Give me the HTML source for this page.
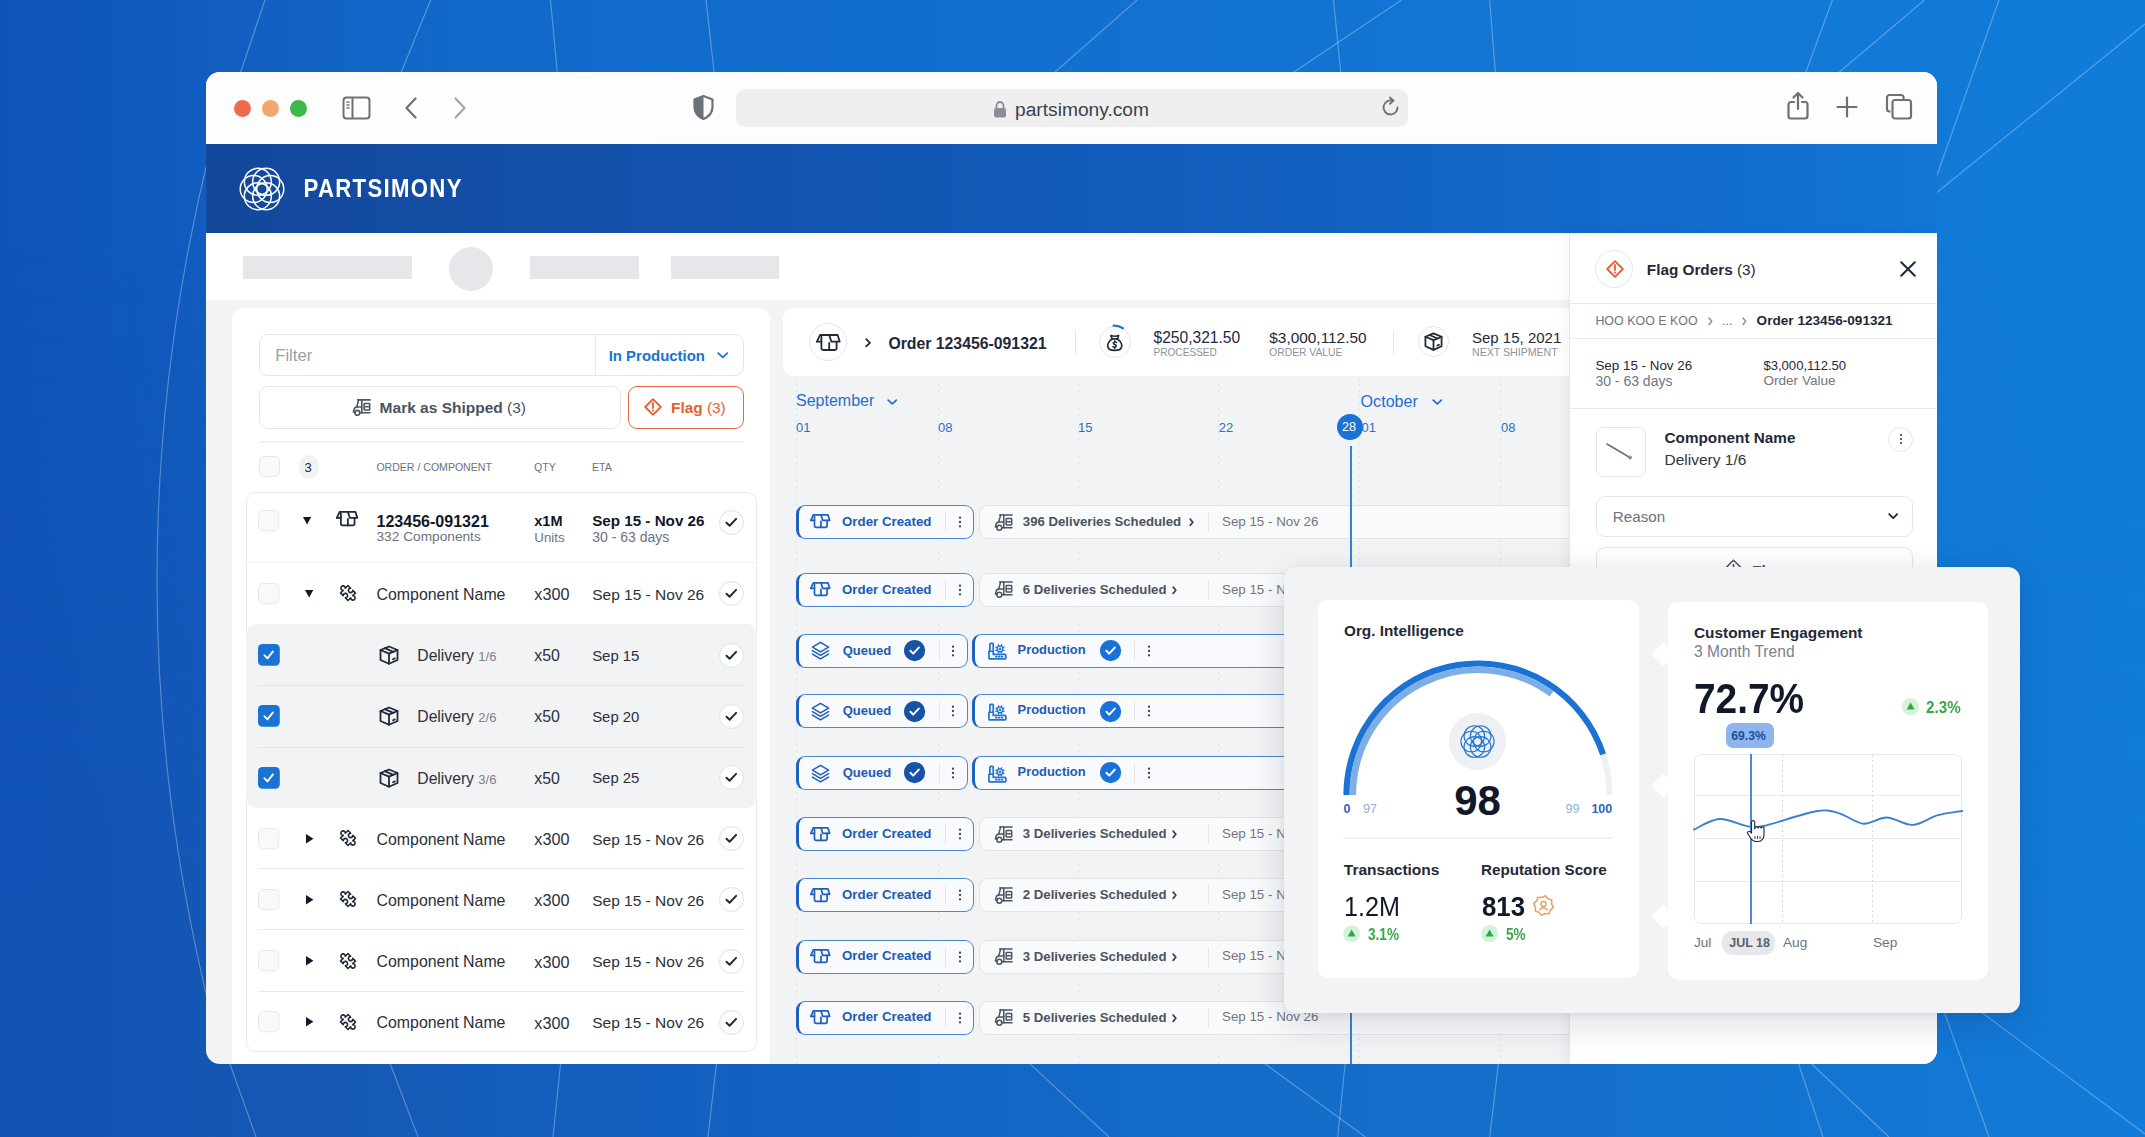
<!DOCTYPE html>
<html><head><meta charset="utf-8"><style>
html,body{margin:0;padding:0;width:2145px;height:1137px;overflow:hidden;background:#1160c3}
body{position:relative;font-family:"Liberation Sans",sans-serif}
.b{position:absolute;box-sizing:border-box}
.t{position:absolute;line-height:1;white-space:nowrap}
svg.b{overflow:visible}
</style></head><body>
<div class="b" style="left:0;top:0;width:2145px;height:1137px;background:linear-gradient(90deg,#1054b7 0%,#1059bd 7%,#1262c3 14%,#1169ca 23%,#126fcf 47%,#1377d5 75%,#107cd9 100%)"></div>
<div class="b" style="left:0;top:0;width:2145px;height:1137px;background:linear-gradient(90deg,#1052b4 0%,#1658b4 14%,#135fbe 28%,#1264c4 42%,#136cc8 58%,#1470cc 75%,#127bd9 100%);-webkit-mask-image:linear-gradient(180deg,transparent 0px,transparent 250px,#000 900px,#000 1137px)"></div>
<svg class="b" style="left:0;top:0" width="2145" height="1137" viewBox="0 0 2145 1137" fill="none" stroke="rgba(255,255,255,0.30)" stroke-width="1.15"><line x1="265" y1="0" x2="238" y2="80"/><line x1="430.7" y1="0" x2="398" y2="80"/><line x1="550.5" y1="0" x2="558" y2="80"/><line x1="706" y1="0" x2="715" y2="80"/><line x1="1137" y1="0" x2="1046" y2="80"/><line x1="1333.5" y1="0" x2="1341.5" y2="80"/><line x1="1401.5" y1="0" x2="1282" y2="80"/><line x1="1489.6" y1="0" x2="1496" y2="80"/><line x1="1832.4" y1="0" x2="1803" y2="80"/><line x1="1924.5" y1="0" x2="1830" y2="80"/><line x1="1999" y1="0" x2="1930" y2="195"/><line x1="2145" y1="24" x2="1930" y2="198"/><line x1="225" y1="1050" x2="256" y2="1137"/><line x1="385" y1="1050" x2="418" y2="1137"/><line x1="562" y1="1050" x2="553" y2="1137"/><line x1="718" y1="1050" x2="708" y2="1137"/><line x1="1015" y1="1050" x2="1109" y2="1137"/><line x1="1246" y1="1050" x2="1365.5" y2="1137"/><line x1="1346.5" y1="1050" x2="1337.7" y2="1137"/><line x1="1500" y1="1050" x2="1489.7" y2="1137"/><line x1="1794" y1="1050" x2="1823" y2="1137"/><line x1="1797" y1="1050" x2="1889" y2="1137"/><line x1="1940" y1="1000" x2="1989" y2="1137"/><line x1="1965" y1="1000" x2="2145" y2="1134"/><path d="M210 150 Q104 580 210 1010"/></svg>
<div class="b" style="left:0;top:0;width:2145px;height:1137px;clip-path:inset(72px 208px 73px 206px round 14px)">
<div class="b" style="left:206.0px;top:72.0px;width:1731.0px;height:992.0px;background:#f2f3f5"></div>
<div class="b" style="left:206.0px;top:72.0px;width:1731.0px;height:72.0px;background:#fdfdfd"></div>
<div class="b" style="left:206.0px;top:144.0px;width:1731.0px;height:89.0px;background:linear-gradient(90deg,#13489b 0%,#1350aa 23%,#125bba 52%,#1269c9 80%,#1275d4 100%)"></div>
<div class="b" style="left:206.0px;top:233.0px;width:1731.0px;height:67.0px;background:#ffffff"></div>
<div class="b" style="left:243.0px;top:256.0px;width:168.5px;height:23.0px;background:#e6e7eb"></div>
<div class="b" style="left:449.0px;top:247.0px;width:44.0px;height:44.0px;background:#e6e7eb;border-radius:50%"></div>
<div class="b" style="left:530.0px;top:256.0px;width:108.5px;height:23.0px;background:#e6e7eb"></div>
<div class="b" style="left:670.5px;top:256.0px;width:108.5px;height:23.0px;background:#e6e7eb"></div>
<div class="b" style="left:234.0px;top:99.5px;width:17.0px;height:17.0px;background:#ec6a4e;border-radius:50%"></div>
<div class="b" style="left:262.0px;top:99.5px;width:17.0px;height:17.0px;background:#f0a86f;border-radius:50%"></div>
<div class="b" style="left:289.5px;top:99.5px;width:17.0px;height:17.0px;background:#3fb84a;border-radius:50%"></div>
<svg class="b" style="left:342.0px;top:96.0px;" width="29" height="24" viewBox="0 0 29 24" fill="none"><rect x="1.5" y="1.5" width="26" height="21" rx="3" stroke="#6b7079" stroke-width="2"/><line x1="10.5" y1="2" x2="10.5" y2="22" stroke="#6b7079" stroke-width="2"/><line x1="4.5" y1="6" x2="7.5" y2="6" stroke="#6b7079" stroke-width="1.4"/><line x1="4.5" y1="9" x2="7.5" y2="9" stroke="#6b7079" stroke-width="1.4"/><line x1="4.5" y1="12" x2="7.5" y2="12" stroke="#6b7079" stroke-width="1.4"/></svg>
<svg class="b" style="left:403.0px;top:96.0px;" width="16" height="24" viewBox="0 0 16 24" fill="none"><path d="M12.5 2.5 L3.5 12 L12.5 21.5" stroke="#6b7079" stroke-width="2.2" stroke-linecap="round" stroke-linejoin="round"/></svg>
<svg class="b" style="left:452.0px;top:96.0px;" width="16" height="24" viewBox="0 0 16 24" fill="none"><path d="M3.5 2.5 L12.5 12 L3.5 21.5" stroke="#a3a7ae" stroke-width="2.2" stroke-linecap="round" stroke-linejoin="round"/></svg>
<svg class="b" style="left:692.0px;top:94.0px;" width="23" height="27" viewBox="0 0 23 27" fill="none"><path d="M11.5 2 L20.5 5.5 V13 C20.5 19 16.5 22.8 11.5 25 C6.5 22.8 2.5 19 2.5 13 V5.5 Z" stroke="#6b7079" stroke-width="2.2" stroke-linejoin="round"/><path d="M11.5 2 L2.5 5.5 V13 C2.5 19 6.5 22.8 11.5 25 Z" fill="#6b7079"/></svg>
<div class="b" style="left:736.0px;top:89.0px;width:672.0px;height:38.0px;background:#efeff0;border-radius:9px"></div>
<svg class="b" style="left:993.0px;top:100.0px;" width="14" height="18" viewBox="0 0 14 18" fill="none"><path d="M3.5 8 V5.5 a3.5 3.5 0 0 1 7 0 V8" stroke="#8a8e95" stroke-width="1.8"/><rect x="1" y="8" width="12" height="9.5" rx="2" fill="#8a8e95"/></svg>
<div class="t" style="left:1015.0px;top:100.1px;font-size:19.2px;font-weight:400;color:#3c414b;">partsimony.com</div>
<svg class="b" style="left:1381.0px;top:96.0px;" width="20" height="22" viewBox="0 0 20 22" fill="none"><path d="M16.5 11.5 A7 7 0 1 1 11 4.6" stroke="#6b7079" stroke-width="1.9" stroke-linecap="round"/><path d="M9 1.5 L12.5 4.6 L9 7.8" stroke="#6b7079" stroke-width="1.9" stroke-linecap="round" stroke-linejoin="round"/></svg>
<svg class="b" style="left:1786.0px;top:91.0px;" width="24" height="30" viewBox="0 0 24 30" fill="none"><path d="M8 11 H5 a2.5 2.5 0 0 0 -2.5 2.5 V25 a2.5 2.5 0 0 0 2.5 2.5 H19 a2.5 2.5 0 0 0 2.5 -2.5 V13.5 a2.5 2.5 0 0 0 -2.5 -2.5 H16" stroke="#6b7079" stroke-width="2.2" stroke-linecap="round"/><path d="M12 18 V2.5 M7.5 6.5 L12 2 L16.5 6.5" stroke="#6b7079" stroke-width="2.2" stroke-linecap="round" stroke-linejoin="round"/></svg>
<svg class="b" style="left:1836.0px;top:96.0px;" width="22" height="22" viewBox="0 0 22 22" fill="none"><path d="M11 1.5 V20.5 M1.5 11 H20.5" stroke="#6b7079" stroke-width="2.2" stroke-linecap="round"/></svg>
<svg class="b" style="left:1885.0px;top:93.0px;" width="28" height="28" viewBox="0 0 28 28" fill="none"><path d="M5.5 18.5 H4.5 a2.5 2.5 0 0 1 -2.5 -2.5 V4.5 a2.5 2.5 0 0 1 2.5 -2.5 H16 a2.5 2.5 0 0 1 2.5 2.5 V6" stroke="#6b7079" stroke-width="2.2"/><rect x="7.5" y="7" width="18.5" height="18.5" rx="2.5" stroke="#6b7079" stroke-width="2.2"/></svg>
<svg class="b" style="left:239.0px;top:166.0px;" width="46" height="46" viewBox="0 0 46 46" fill="none"><g stroke="#ffffff" stroke-width="1.5" fill="none"><circle cx="31.28" cy="23.00" r="13.51"/><circle cx="27.14" cy="30.17" r="13.51"/><circle cx="18.86" cy="30.17" r="13.51"/><circle cx="14.72" cy="23.00" r="13.51"/><circle cx="18.86" cy="15.83" r="13.51"/><circle cx="27.14" cy="15.83" r="13.51"/></g></svg>
<div class="t" style="left:303.5px;top:179.0px;font-size:22.2px;font-weight:700;color:#ffffff;letter-spacing:1.3px;transform:scaleY(1.14);transform-origin:0 80%">PARTSIMONY</div>
<div class="b" style="left:232.0px;top:308.0px;width:538.0px;height:800.0px;background:#ffffff;border-radius:12px"></div>
<div class="b" style="left:258.5px;top:334.3px;width:485.0px;height:42.0px;border:1px solid #e4e6ea;border-radius:9px;background:#fff"></div>
<div class="b" style="left:594.5px;top:335.0px;width:1.0px;height:40.5px;background:#e8eaee"></div>
<div class="t" style="left:275.3px;top:347.9px;font-size:16.6px;font-weight:400;color:#9aa0aa;">Filter</div>
<div class="t" style="left:608.7px;top:349.2px;font-size:14.95px;font-weight:700;color:#1a72d0;">In Production</div>
<svg class="b" style="left:717.0px;top:352.0px;" width="11.5" height="6.5" viewBox="0 0 11.5 6.5" fill="none"><path d="M1.2 1.2 L5.75 5.3 L10.299999999999999 1.2" stroke="#1a72d0" stroke-width="1.8" stroke-linecap="round" stroke-linejoin="round"/></svg>
<div class="b" style="left:259.3px;top:385.5px;width:361.5px;height:43.0px;border:1px solid #e4e6ea;border-radius:9px;background:#fff"></div>
<svg class="b" style="left:351.5px;top:397.5px;" width="19" height="19" viewBox="0 0 19 19" fill="none"><g transform="scale(0.950)" stroke="#4b5563" stroke-width="1.68" stroke-linejoin="round" stroke-linecap="round"><path d="M6 2 H19"/><path d="M7 2 L5 9.5"/><path d="M10.3 2 V15.5 H19"/><rect x="12.8" y="5.8" width="5.8" height="6.8" rx="0.6"/><path d="M14.2 9.2 H17.2"/><path d="M10.3 9.5 H5 Q2.5 9.8 2 12.5 L1.5 14.8 H3.6"/><circle cx="5.6" cy="15.6" r="2.6"/><path d="M8.2 15.5 H10.3"/></g></svg>
<div class="t" style="left:379.6px;top:400.0px;font-size:15.5px;font-weight:700;color:#4b5261;">Mark as Shipped <span style="font-weight:400">(3)</span></div>
<div class="b" style="left:628.4px;top:385.5px;width:115.2px;height:43.0px;border:1.6px solid #e8683f;border-radius:9px;background:#fff"></div>
<svg class="b" style="left:644.0px;top:398.0px;" width="18" height="18" viewBox="0 0 18 18" fill="none"><path d="M9.0 1.2 L16.8 9.0 L9.0 16.8 L1.2 9.0 Z" stroke="#e4602f" stroke-width="1.8" stroke-linejoin="round"/><path d="M9.0 5.0 V10.0" stroke="#e4602f" stroke-width="1.8" stroke-linecap="round"/><circle cx="9.0" cy="12.6" r="1.05" fill="#e4602f"/></svg>
<div class="t" style="left:671.0px;top:400.1px;font-size:15.4px;font-weight:700;color:#e4602f;">Flag <span style="font-weight:400">(3)</span></div>
<div class="b" style="left:258.5px;top:441.0px;width:485.0px;height:2.0px;background:#eef0f3"></div>
<svg class="b" style="left:258.5px;top:456.4px;" width="21" height="21" viewBox="0 0 21 21" fill="none"><rect x="0.5" y="0.5" width="20" height="20" rx="4.5" fill="#f8f9fb" stroke="#e5e7eb" stroke-width="1"/></svg>
<div class="b" style="left:298.8px;top:455.4px;width:20.0px;height:24.0px;background:#f1f2f4;border-radius:10px"></div>
<div class="t" style="left:304.5px;top:461.3px;font-size:13px;font-weight:400;color:#1f2937;">3</div>
<div class="t" style="left:376.4px;top:462.2px;font-size:10.55px;font-weight:400;color:#6b7280;">ORDER / COMPONENT</div>
<div class="t" style="left:534.0px;top:462.2px;font-size:10.6px;font-weight:400;color:#6b7280;">QTY</div>
<div class="t" style="left:592.0px;top:462.2px;font-size:10.6px;font-weight:400;color:#6b7280;">ETA</div>
<div class="b" style="left:246.0px;top:492.0px;width:510.6px;height:560.2px;border:1px solid #e8eaee;border-radius:10px;background:#fff"></div>
<div class="b" style="left:246.0px;top:562.0px;width:510.6px;height:1.2px;background:#eceef1"></div>
<div class="b" style="left:246.0px;top:624.0px;width:510.6px;height:183.6px;background:#f2f3f5;border-radius:10px"></div>
<div class="b" style="left:258.0px;top:684.5px;width:486.5px;height:1.0px;background:#e2e5e9"></div>
<div class="b" style="left:258.0px;top:746.5px;width:486.5px;height:1.0px;background:#e2e5e9"></div>
<div class="b" style="left:258.0px;top:868.2px;width:486.5px;height:1.0px;background:#e8eaee"></div>
<div class="b" style="left:258.0px;top:929.2px;width:486.5px;height:1.0px;background:#e8eaee"></div>
<div class="b" style="left:258.0px;top:991.0px;width:486.5px;height:1.0px;background:#e8eaee"></div>
<svg class="b" style="left:258.0px;top:510.0px;" width="21.3" height="21.3" viewBox="0 0 21.3 21.3" fill="none"><rect x="0.5" y="0.5" width="20.3" height="20.3" rx="4.5" fill="#f8f9fb" stroke="#e5e7eb" stroke-width="1"/></svg>
<svg class="b" style="left:303.4px;top:516.8px;" width="8.2" height="7.4" viewBox="0 0 8.2 7.4" fill="none"><path d="M0 0 H8.2 L4.1 7.4 Z" fill="#111827"/></svg>
<svg class="b" style="left:335.6px;top:511.0px;" width="22.5" height="15.8" viewBox="0 0 22.5 15.8" fill="none"><g transform="scale(0.9)" stroke="#1f2937" stroke-width="2.00" stroke-linejoin="round" stroke-linecap="round"><path d="M1 7.6 L4 1 H21.6 L23.7 7.6 H15.3 L13.2 1"/><path d="M1 7.6 H5.4"/><path d="M5.4 2.4 V14.2 a1.8 1.8 0 0 0 1.8 1.8 H18.8 a1.8 1.8 0 0 0 1.8 -1.8 V7.6"/><path d="M13.2 8.8 V16"/></g></svg>
<div class="t" style="left:376.5px;top:512.6px;font-size:16.05px;font-weight:700;color:#111827;">123456-091321</div>
<div class="t" style="left:376.5px;top:530.4px;font-size:13.7px;font-weight:400;color:#6b7280;">332 Components</div>
<div class="t" style="left:534.3px;top:513.9px;font-size:14.5px;font-weight:700;color:#111827;">x1M</div>
<div class="t" style="left:534.3px;top:530.7px;font-size:13.3px;font-weight:400;color:#6b7280;">Units</div>
<div class="t" style="left:592.2px;top:513.3px;font-size:15.2px;font-weight:700;color:#111827;">Sep 15 - Nov 26</div>
<div class="t" style="left:592.2px;top:530.1px;font-size:14.0px;font-weight:400;color:#6b7280;">30 - 63 days</div>
<svg class="b" style="left:718.7px;top:510.0px;" width="25" height="25" viewBox="0 0 25 25" fill="none"><circle cx="12.5" cy="12.5" r="11.9" fill="#fff" stroke="#e3e6ea" stroke-width="1.1"/><path d="M7.5 12.7 L10.6 15.7 L17.1 8.9" stroke="#1f2937" stroke-width="2" stroke-linecap="round" stroke-linejoin="round"/></svg>
<svg class="b" style="left:258.0px;top:582.9px;" width="21.3" height="21.3" viewBox="0 0 21.3 21.3" fill="none"><rect x="0.5" y="0.5" width="20.3" height="20.3" rx="4.5" fill="#f8f9fb" stroke="#e5e7eb" stroke-width="1"/></svg>
<svg class="b" style="left:305.2px;top:589.9px;" width="8.3" height="7.4" viewBox="0 0 8.3 7.4" fill="none"><path d="M0 0 H8.3 L4.15 7.4 Z" fill="#111827"/></svg>
<svg class="b" style="left:339.2px;top:584.2px;" width="18" height="18" viewBox="0 0 18 18" fill="none"><g transform="translate(9.00 9.00) scale(1.000) rotate(45)" stroke="#1f2937" stroke-width="1.60" stroke-linejoin="round"><path d="M-5.3 -5.3 H-1.5 A2.2 2.2 0 1 0 1.5 -5.3 H5.3 V-1.5 A2.2 2.2 0 1 1 5.3 1.5 V5.3 H1.5 A2.2 2.2 0 1 0 -1.5 5.3 H-5.3 V1.5 A2.2 2.2 0 1 1 -5.3 -1.5 Z"/></g></svg>
<div class="t" style="left:376.5px;top:586.6px;font-size:15.9px;font-weight:400;color:#2b303a;">Component Name</div>
<div class="t" style="left:534.3px;top:586.3px;font-size:16.2px;font-weight:400;color:#2b303a;">x300</div>
<div class="t" style="left:592.2px;top:586.9px;font-size:15.5px;font-weight:400;color:#2b303a;">Sep 15 - Nov 26</div>
<svg class="b" style="left:718.7px;top:581.0px;" width="25" height="25" viewBox="0 0 25 25" fill="none"><circle cx="12.5" cy="12.5" r="11.9" fill="#fff" stroke="#e3e6ea" stroke-width="1.1"/><path d="M7.5 12.7 L10.6 15.7 L17.1 8.9" stroke="#1f2937" stroke-width="2" stroke-linecap="round" stroke-linejoin="round"/></svg>
<svg class="b" style="left:257.9px;top:644.0px;" width="21.8" height="21.8" viewBox="0 0 21.8 21.8" fill="none"><rect x="0" y="0" width="21.8" height="21.8" rx="4.5" fill="#1a73d4"/><path d="M6.5 11.3 L9.4 14.4 L15.0 7.4" stroke="#fff" stroke-width="1.9" stroke-linecap="round" stroke-linejoin="round"/></svg>
<svg class="b" style="left:378.6px;top:645.0px;" width="20" height="20" viewBox="0 0 20 20" fill="none"><g transform="scale(1.000)" stroke="#1f2937" stroke-width="1.80" stroke-linejoin="round" stroke-linecap="round"><path d="M10 1.5 L18.5 5 V15 L10 18.8 L1.5 15 V5 Z"/><path d="M1.5 5 L10 8.6 L18.5 5"/><path d="M10 8.6 V18.8"/><path d="M5.8 3.2 L14.3 6.8"/><path d="M14 14.2 L15.8 13.4"/></g></svg>
<div class="t" style="left:417.3px;top:648.2px;font-size:15.7px;font-weight:400;color:#2b303a;">Delivery <span style="color:#7b818b;font-size:13px">1/6</span></div>
<div class="t" style="left:534.3px;top:648.1px;font-size:15.9px;font-weight:400;color:#2b303a;">x50</div>
<div class="t" style="left:592.2px;top:648.9px;font-size:14.9px;font-weight:400;color:#2b303a;">Sep 15</div>
<svg class="b" style="left:718.7px;top:642.5px;" width="25" height="25" viewBox="0 0 25 25" fill="none"><circle cx="12.5" cy="12.5" r="11.9" fill="#fff" stroke="#e3e6ea" stroke-width="1.1"/><path d="M7.5 12.7 L10.6 15.7 L17.1 8.9" stroke="#1f2937" stroke-width="2" stroke-linecap="round" stroke-linejoin="round"/></svg>
<svg class="b" style="left:257.9px;top:705.0px;" width="21.8" height="21.8" viewBox="0 0 21.8 21.8" fill="none"><rect x="0" y="0" width="21.8" height="21.8" rx="4.5" fill="#1a73d4"/><path d="M6.5 11.3 L9.4 14.4 L15.0 7.4" stroke="#fff" stroke-width="1.9" stroke-linecap="round" stroke-linejoin="round"/></svg>
<svg class="b" style="left:378.6px;top:706.0px;" width="20" height="20" viewBox="0 0 20 20" fill="none"><g transform="scale(1.000)" stroke="#1f2937" stroke-width="1.80" stroke-linejoin="round" stroke-linecap="round"><path d="M10 1.5 L18.5 5 V15 L10 18.8 L1.5 15 V5 Z"/><path d="M1.5 5 L10 8.6 L18.5 5"/><path d="M10 8.6 V18.8"/><path d="M5.8 3.2 L14.3 6.8"/><path d="M14 14.2 L15.8 13.4"/></g></svg>
<div class="t" style="left:417.3px;top:709.2px;font-size:15.7px;font-weight:400;color:#2b303a;">Delivery <span style="color:#7b818b;font-size:13px">2/6</span></div>
<div class="t" style="left:534.3px;top:709.1px;font-size:15.9px;font-weight:400;color:#2b303a;">x50</div>
<div class="t" style="left:592.2px;top:709.9px;font-size:14.9px;font-weight:400;color:#2b303a;">Sep 20</div>
<svg class="b" style="left:718.7px;top:703.5px;" width="25" height="25" viewBox="0 0 25 25" fill="none"><circle cx="12.5" cy="12.5" r="11.9" fill="#fff" stroke="#e3e6ea" stroke-width="1.1"/><path d="M7.5 12.7 L10.6 15.7 L17.1 8.9" stroke="#1f2937" stroke-width="2" stroke-linecap="round" stroke-linejoin="round"/></svg>
<svg class="b" style="left:257.9px;top:766.5px;" width="21.8" height="21.8" viewBox="0 0 21.8 21.8" fill="none"><rect x="0" y="0" width="21.8" height="21.8" rx="4.5" fill="#1a73d4"/><path d="M6.5 11.3 L9.4 14.4 L15.0 7.4" stroke="#fff" stroke-width="1.9" stroke-linecap="round" stroke-linejoin="round"/></svg>
<svg class="b" style="left:378.6px;top:767.5px;" width="20" height="20" viewBox="0 0 20 20" fill="none"><g transform="scale(1.000)" stroke="#1f2937" stroke-width="1.80" stroke-linejoin="round" stroke-linecap="round"><path d="M10 1.5 L18.5 5 V15 L10 18.8 L1.5 15 V5 Z"/><path d="M1.5 5 L10 8.6 L18.5 5"/><path d="M10 8.6 V18.8"/><path d="M5.8 3.2 L14.3 6.8"/><path d="M14 14.2 L15.8 13.4"/></g></svg>
<div class="t" style="left:417.3px;top:770.7px;font-size:15.7px;font-weight:400;color:#2b303a;">Delivery <span style="color:#7b818b;font-size:13px">3/6</span></div>
<div class="t" style="left:534.3px;top:770.6px;font-size:15.9px;font-weight:400;color:#2b303a;">x50</div>
<div class="t" style="left:592.2px;top:771.4px;font-size:14.9px;font-weight:400;color:#2b303a;">Sep 25</div>
<svg class="b" style="left:718.7px;top:765.0px;" width="25" height="25" viewBox="0 0 25 25" fill="none"><circle cx="12.5" cy="12.5" r="11.9" fill="#fff" stroke="#e3e6ea" stroke-width="1.1"/><path d="M7.5 12.7 L10.6 15.7 L17.1 8.9" stroke="#1f2937" stroke-width="2" stroke-linecap="round" stroke-linejoin="round"/></svg>
<svg class="b" style="left:258.0px;top:827.9px;" width="21.3" height="21.3" viewBox="0 0 21.3 21.3" fill="none"><rect x="0.5" y="0.5" width="20.3" height="20.3" rx="4.5" fill="#f8f9fb" stroke="#e5e7eb" stroke-width="1"/></svg>
<svg class="b" style="left:305.8px;top:833.7px;" width="7.4" height="9.6" viewBox="0 0 7.4 9.6" fill="none"><path d="M0 0 L7.4 4.8 L0 9.6 Z" fill="#111827"/></svg>
<svg class="b" style="left:339.2px;top:829.2px;" width="18" height="18" viewBox="0 0 18 18" fill="none"><g transform="translate(9.00 9.00) scale(1.000) rotate(45)" stroke="#1f2937" stroke-width="1.60" stroke-linejoin="round"><path d="M-5.3 -5.3 H-1.5 A2.2 2.2 0 1 0 1.5 -5.3 H5.3 V-1.5 A2.2 2.2 0 1 1 5.3 1.5 V5.3 H1.5 A2.2 2.2 0 1 0 -1.5 5.3 H-5.3 V1.5 A2.2 2.2 0 1 1 -5.3 -1.5 Z"/></g></svg>
<div class="t" style="left:376.5px;top:831.6px;font-size:15.9px;font-weight:400;color:#2b303a;">Component Name</div>
<div class="t" style="left:534.3px;top:831.3px;font-size:16.2px;font-weight:400;color:#2b303a;">x300</div>
<div class="t" style="left:592.2px;top:831.9px;font-size:15.5px;font-weight:400;color:#2b303a;">Sep 15 - Nov 26</div>
<svg class="b" style="left:718.7px;top:826.0px;" width="25" height="25" viewBox="0 0 25 25" fill="none"><circle cx="12.5" cy="12.5" r="11.9" fill="#fff" stroke="#e3e6ea" stroke-width="1.1"/><path d="M7.5 12.7 L10.6 15.7 L17.1 8.9" stroke="#1f2937" stroke-width="2" stroke-linecap="round" stroke-linejoin="round"/></svg>
<svg class="b" style="left:258.0px;top:889.0px;" width="21.3" height="21.3" viewBox="0 0 21.3 21.3" fill="none"><rect x="0.5" y="0.5" width="20.3" height="20.3" rx="4.5" fill="#f8f9fb" stroke="#e5e7eb" stroke-width="1"/></svg>
<svg class="b" style="left:305.8px;top:894.8px;" width="7.4" height="9.6" viewBox="0 0 7.4 9.6" fill="none"><path d="M0 0 L7.4 4.8 L0 9.6 Z" fill="#111827"/></svg>
<svg class="b" style="left:339.2px;top:890.3px;" width="18" height="18" viewBox="0 0 18 18" fill="none"><g transform="translate(9.00 9.00) scale(1.000) rotate(45)" stroke="#1f2937" stroke-width="1.60" stroke-linejoin="round"><path d="M-5.3 -5.3 H-1.5 A2.2 2.2 0 1 0 1.5 -5.3 H5.3 V-1.5 A2.2 2.2 0 1 1 5.3 1.5 V5.3 H1.5 A2.2 2.2 0 1 0 -1.5 5.3 H-5.3 V1.5 A2.2 2.2 0 1 1 -5.3 -1.5 Z"/></g></svg>
<div class="t" style="left:376.5px;top:892.7px;font-size:15.9px;font-weight:400;color:#2b303a;">Component Name</div>
<div class="t" style="left:534.3px;top:892.4px;font-size:16.2px;font-weight:400;color:#2b303a;">x300</div>
<div class="t" style="left:592.2px;top:893.0px;font-size:15.5px;font-weight:400;color:#2b303a;">Sep 15 - Nov 26</div>
<svg class="b" style="left:718.7px;top:887.1px;" width="25" height="25" viewBox="0 0 25 25" fill="none"><circle cx="12.5" cy="12.5" r="11.9" fill="#fff" stroke="#e3e6ea" stroke-width="1.1"/><path d="M7.5 12.7 L10.6 15.7 L17.1 8.9" stroke="#1f2937" stroke-width="2" stroke-linecap="round" stroke-linejoin="round"/></svg>
<svg class="b" style="left:258.0px;top:950.4px;" width="21.3" height="21.3" viewBox="0 0 21.3 21.3" fill="none"><rect x="0.5" y="0.5" width="20.3" height="20.3" rx="4.5" fill="#f8f9fb" stroke="#e5e7eb" stroke-width="1"/></svg>
<svg class="b" style="left:305.8px;top:956.2px;" width="7.4" height="9.6" viewBox="0 0 7.4 9.6" fill="none"><path d="M0 0 L7.4 4.8 L0 9.6 Z" fill="#111827"/></svg>
<svg class="b" style="left:339.2px;top:951.7px;" width="18" height="18" viewBox="0 0 18 18" fill="none"><g transform="translate(9.00 9.00) scale(1.000) rotate(45)" stroke="#1f2937" stroke-width="1.60" stroke-linejoin="round"><path d="M-5.3 -5.3 H-1.5 A2.2 2.2 0 1 0 1.5 -5.3 H5.3 V-1.5 A2.2 2.2 0 1 1 5.3 1.5 V5.3 H1.5 A2.2 2.2 0 1 0 -1.5 5.3 H-5.3 V1.5 A2.2 2.2 0 1 1 -5.3 -1.5 Z"/></g></svg>
<div class="t" style="left:376.5px;top:954.1px;font-size:15.9px;font-weight:400;color:#2b303a;">Component Name</div>
<div class="t" style="left:534.3px;top:953.8px;font-size:16.2px;font-weight:400;color:#2b303a;">x300</div>
<div class="t" style="left:592.2px;top:954.4px;font-size:15.5px;font-weight:400;color:#2b303a;">Sep 15 - Nov 26</div>
<svg class="b" style="left:718.7px;top:948.5px;" width="25" height="25" viewBox="0 0 25 25" fill="none"><circle cx="12.5" cy="12.5" r="11.9" fill="#fff" stroke="#e3e6ea" stroke-width="1.1"/><path d="M7.5 12.7 L10.6 15.7 L17.1 8.9" stroke="#1f2937" stroke-width="2" stroke-linecap="round" stroke-linejoin="round"/></svg>
<svg class="b" style="left:258.0px;top:1011.4px;" width="21.3" height="21.3" viewBox="0 0 21.3 21.3" fill="none"><rect x="0.5" y="0.5" width="20.3" height="20.3" rx="4.5" fill="#f8f9fb" stroke="#e5e7eb" stroke-width="1"/></svg>
<svg class="b" style="left:305.8px;top:1017.2px;" width="7.4" height="9.6" viewBox="0 0 7.4 9.6" fill="none"><path d="M0 0 L7.4 4.8 L0 9.6 Z" fill="#111827"/></svg>
<svg class="b" style="left:339.2px;top:1012.7px;" width="18" height="18" viewBox="0 0 18 18" fill="none"><g transform="translate(9.00 9.00) scale(1.000) rotate(45)" stroke="#1f2937" stroke-width="1.60" stroke-linejoin="round"><path d="M-5.3 -5.3 H-1.5 A2.2 2.2 0 1 0 1.5 -5.3 H5.3 V-1.5 A2.2 2.2 0 1 1 5.3 1.5 V5.3 H1.5 A2.2 2.2 0 1 0 -1.5 5.3 H-5.3 V1.5 A2.2 2.2 0 1 1 -5.3 -1.5 Z"/></g></svg>
<div class="t" style="left:376.5px;top:1015.1px;font-size:15.9px;font-weight:400;color:#2b303a;">Component Name</div>
<div class="t" style="left:534.3px;top:1014.8px;font-size:16.2px;font-weight:400;color:#2b303a;">x300</div>
<div class="t" style="left:592.2px;top:1015.4px;font-size:15.5px;font-weight:400;color:#2b303a;">Sep 15 - Nov 26</div>
<svg class="b" style="left:718.7px;top:1009.5px;" width="25" height="25" viewBox="0 0 25 25" fill="none"><circle cx="12.5" cy="12.5" r="11.9" fill="#fff" stroke="#e3e6ea" stroke-width="1.1"/><path d="M7.5 12.7 L10.6 15.7 L17.1 8.9" stroke="#1f2937" stroke-width="2" stroke-linecap="round" stroke-linejoin="round"/></svg>
<div class="b" style="left:783.0px;top:308.4px;width:820.0px;height:68.0px;background:#fff;border-radius:10px"></div>
<div class="b" style="left:809.0px;top:323.3px;width:38.0px;height:38.0px;border:1px solid #e3e6ea;border-radius:50%;background:#fff"></div>
<svg class="b" style="left:816.0px;top:334.0px;" width="25.0" height="17.5" viewBox="0 0 25.0 17.5" fill="none"><g transform="scale(1.0)" stroke="#1f2937" stroke-width="1.80" stroke-linejoin="round" stroke-linecap="round"><path d="M1 7.6 L4 1 H21.6 L23.7 7.6 H15.3 L13.2 1"/><path d="M1 7.6 H5.4"/><path d="M5.4 2.4 V14.2 a1.8 1.8 0 0 0 1.8 1.8 H18.8 a1.8 1.8 0 0 0 1.8 -1.8 V7.6"/><path d="M13.2 8.8 V16"/></g></svg>
<svg class="b" style="left:864.8px;top:338.2px;" width="6.2" height="9.6" viewBox="0 0 6.2 9.6" fill="none"><path d="M1.2 1.2 L5.0 4.8 L1.2 8.399999999999999" stroke="#1f2937" stroke-width="1.8" stroke-linecap="round" stroke-linejoin="round"/></svg>
<div class="t" style="left:888.4px;top:335.5px;font-size:15.8px;font-weight:700;color:#1f2937;">Order 123456-091321</div>
<div class="b" style="left:1074.8px;top:329.8px;width:1.0px;height:25.2px;background:#e5e7eb"></div>
<div class="b" style="left:1098.6px;top:326.2px;width:32.0px;height:32.0px;border:1px solid #e3e6ea;border-radius:50%;background:#fff"></div>
<svg class="b" style="left:1098.6px;top:326.2px;" width="32" height="32" viewBox="0 0 32 32" fill="none"><path d="M14.6 -0.3 A16.3 16.3 0 0 1 23.9 2.2" stroke="#1a73d4" stroke-width="2.2" stroke-linecap="round"/></svg>
<svg class="b" style="left:1105.8px;top:333.5px;" width="17.5" height="17.5" viewBox="0 0 17.5 17.5" fill="none"><g transform="scale(0.972)" stroke="#1f2937" stroke-width="1.65" stroke-linejoin="round" stroke-linecap="round"><path d="M6.2 5 L5 1.5 Q9 3 13 1.5 L11.8 5"/><path d="M6.2 5 H11.8"/><path d="M6.4 5.2 C2 7.5 1.2 11.5 2.2 14 C3 16.2 5.5 16.8 9 16.8 C12.5 16.8 15 16.2 15.8 14 C16.8 11.5 16 7.5 11.6 5.2"/><path d="M10.8 8.6 Q9 7.8 7.8 8.8 Q7 10 9 10.8 Q11 11.6 10.2 13 Q9 14 7.2 13.2 M9 7.2 V8.2 M9 13.6 V14.6"/></g></svg>
<div class="t" style="left:1153.5px;top:329.9px;font-size:15.6px;font-weight:400;color:#1f2937;">$250,321.50</div>
<div class="t" style="left:1153.5px;top:347.6px;font-size:10.1px;font-weight:400;color:#8d929b;">PROCESSED</div>
<div class="t" style="left:1269.3px;top:330.1px;font-size:15.4px;font-weight:400;color:#1f2937;">$3,000,112.50</div>
<div class="t" style="left:1269.3px;top:347.5px;font-size:10.3px;font-weight:400;color:#8d929b;">ORDER VALUE</div>
<div class="b" style="left:1393.3px;top:330.5px;width:1.0px;height:24.0px;background:#e5e7eb"></div>
<div class="b" style="left:1417.8px;top:326.2px;width:31.0px;height:31.0px;border:1px solid #e3e6ea;border-radius:50%;background:#fff"></div>
<svg class="b" style="left:1423.6px;top:332.0px;" width="19" height="19" viewBox="0 0 19 19" fill="none"><g transform="scale(0.950)" stroke="#1f2937" stroke-width="1.89" stroke-linejoin="round" stroke-linecap="round"><path d="M10 1.5 L18.5 5 V15 L10 18.8 L1.5 15 V5 Z"/><path d="M1.5 5 L10 8.6 L18.5 5"/><path d="M10 8.6 V18.8"/><path d="M5.8 3.2 L14.3 6.8"/><path d="M14 14.2 L15.8 13.4"/></g></svg>
<div class="t" style="left:1472.0px;top:330.4px;font-size:15.0px;font-weight:400;color:#1f2937;">Sep 15, 2021</div>
<div class="t" style="left:1472.0px;top:347.2px;font-size:10.6px;font-weight:400;color:#8d929b;">NEXT SHIPMENT</div>
<div class="b" style="left:795.5px;top:378.0px;width:1.2px;height:690.0px;background:repeating-linear-gradient(180deg,#dde0e5 0 2px,transparent 2px 6px)"></div>
<div class="b" style="left:937.5px;top:378.0px;width:1.2px;height:690.0px;background:repeating-linear-gradient(180deg,#dde0e5 0 2px,transparent 2px 6px)"></div>
<div class="b" style="left:1078.0px;top:378.0px;width:1.2px;height:690.0px;background:repeating-linear-gradient(180deg,#dde0e5 0 2px,transparent 2px 6px)"></div>
<div class="b" style="left:1218.2px;top:378.0px;width:1.2px;height:690.0px;background:repeating-linear-gradient(180deg,#dde0e5 0 2px,transparent 2px 6px)"></div>
<div class="b" style="left:1359.1px;top:378.0px;width:1.2px;height:690.0px;background:repeating-linear-gradient(180deg,#dde0e5 0 2px,transparent 2px 6px)"></div>
<div class="b" style="left:1499.8px;top:378.0px;width:1.2px;height:690.0px;background:repeating-linear-gradient(180deg,#dde0e5 0 2px,transparent 2px 6px)"></div>
<div class="t" style="left:796.0px;top:393.2px;font-size:16.0px;font-weight:400;color:#1f6fcf;">September</div>
<svg class="b" style="left:887.3px;top:398.5px;" width="10.5" height="6" viewBox="0 0 10.5 6" fill="none"><path d="M1.15 1.15 L5.25 4.8500000000000005 L9.35 1.15" stroke="#1f6fcf" stroke-width="1.7" stroke-linecap="round" stroke-linejoin="round"/></svg>
<div class="t" style="left:1360.6px;top:393.1px;font-size:16.1px;font-weight:400;color:#1f6fcf;">October</div>
<svg class="b" style="left:1431.5px;top:398.5px;" width="10.5" height="6" viewBox="0 0 10.5 6" fill="none"><path d="M1.15 1.15 L5.25 4.8500000000000005 L9.35 1.15" stroke="#1f6fcf" stroke-width="1.7" stroke-linecap="round" stroke-linejoin="round"/></svg>
<div class="t" style="left:796.0px;top:420.9px;font-size:13.0px;font-weight:400;color:#2f6dc2;">01</div>
<div class="t" style="left:938.0px;top:420.9px;font-size:13.0px;font-weight:400;color:#2f6dc2;">08</div>
<div class="t" style="left:1078.0px;top:420.9px;font-size:13.0px;font-weight:400;color:#2f6dc2;">15</div>
<div class="t" style="left:1218.7px;top:420.9px;font-size:13.0px;font-weight:400;color:#2f6dc2;">22</div>
<div class="t" style="left:1361.5px;top:420.9px;font-size:13.0px;font-weight:400;color:#2f6dc2;">01</div>
<div class="t" style="left:1501.0px;top:420.9px;font-size:13.0px;font-weight:400;color:#2f6dc2;">08</div>
<div class="b" style="left:1336.7px;top:413.6px;width:26.6px;height:26.6px;background:#1a73d4;border-radius:50%"></div>
<div class="t" style="left:1342.0px;top:420.9px;font-size:12.6px;font-weight:400;color:#ffffff;">28</div>
<div class="b" style="left:796.2px;top:505.0px;width:177.5px;height:34.0px;border:1.5px solid #4a86d4;border-left:3px solid #1f62bd;border-radius:9px;background:#f8fafd"></div>
<svg class="b" style="left:810.0px;top:514.4px;" width="20.8" height="14.5" viewBox="0 0 20.8 14.5" fill="none"><g transform="scale(0.83)" stroke="#1f5fb8" stroke-width="2.05" stroke-linejoin="round" stroke-linecap="round"><path d="M1 7.6 L4 1 H21.6 L23.7 7.6 H15.3 L13.2 1"/><path d="M1 7.6 H5.4"/><path d="M5.4 2.4 V14.2 a1.8 1.8 0 0 0 1.8 1.8 H18.8 a1.8 1.8 0 0 0 1.8 -1.8 V7.6"/><path d="M13.2 8.8 V16"/></g></svg>
<div class="t" style="left:842.0px;top:514.7px;font-size:13.3px;font-weight:700;color:#1c5cb3;">Order Created</div>
<div class="b" style="left:945.0px;top:512.0px;width:1.0px;height:20.0px;background:#e3e6ea"></div>
<svg class="b" style="left:956.6px;top:514.0px;" width="6" height="16" viewBox="0 0 6 16" fill="none"><circle cx="3" cy="3.7" r="1.15" fill="#374151"/><circle cx="3" cy="8" r="1.15" fill="#374151"/><circle cx="3" cy="12.3" r="1.15" fill="#374151"/></svg>
<div class="b" style="left:979.0px;top:505.0px;width:640.0px;height:34.0px;border:1px solid #e1e4e8;border-radius:9px;background:#f9fafb"></div>
<svg class="b" style="left:993.5px;top:512.5px;" width="19" height="19" viewBox="0 0 19 19" fill="none"><g transform="scale(0.950)" stroke="#4b5563" stroke-width="1.58" stroke-linejoin="round" stroke-linecap="round"><path d="M6 2 H19"/><path d="M7 2 L5 9.5"/><path d="M10.3 2 V15.5 H19"/><rect x="12.8" y="5.8" width="5.8" height="6.8" rx="0.6"/><path d="M14.2 9.2 H17.2"/><path d="M10.3 9.5 H5 Q2.5 9.8 2 12.5 L1.5 14.8 H3.6"/><circle cx="5.6" cy="15.6" r="2.6"/><path d="M8.2 15.5 H10.3"/></g></svg>
<div class="t" style="left:1022.8px;top:514.8px;font-size:13.2px;font-weight:700;color:#4b5261;">396 Deliveries Scheduled</div>
<svg class="b" style="left:1189.1px;top:518.0px;" width="5" height="8.5" viewBox="0 0 5 8.5" fill="none"><path d="M1.15 1.15 L3.8500000000000005 4.25 L1.15 7.3500000000000005" stroke="#374151" stroke-width="1.7" stroke-linecap="round" stroke-linejoin="round"/></svg>
<div class="b" style="left:1208.0px;top:512.0px;width:1.0px;height:20.0px;background:#e3e6ea"></div>
<div class="t" style="left:1222.0px;top:514.7px;font-size:13.35px;font-weight:400;color:#71767f;">Sep 15 - Nov 26</div>
<div class="b" style="left:796.2px;top:572.8px;width:177.5px;height:34.0px;border:1.5px solid #4a86d4;border-left:3px solid #1f62bd;border-radius:9px;background:#f8fafd"></div>
<svg class="b" style="left:810.0px;top:582.2px;" width="20.8" height="14.5" viewBox="0 0 20.8 14.5" fill="none"><g transform="scale(0.83)" stroke="#1f5fb8" stroke-width="2.05" stroke-linejoin="round" stroke-linecap="round"><path d="M1 7.6 L4 1 H21.6 L23.7 7.6 H15.3 L13.2 1"/><path d="M1 7.6 H5.4"/><path d="M5.4 2.4 V14.2 a1.8 1.8 0 0 0 1.8 1.8 H18.8 a1.8 1.8 0 0 0 1.8 -1.8 V7.6"/><path d="M13.2 8.8 V16"/></g></svg>
<div class="t" style="left:842.0px;top:582.5px;font-size:13.3px;font-weight:700;color:#1c5cb3;">Order Created</div>
<div class="b" style="left:945.0px;top:579.8px;width:1.0px;height:20.0px;background:#e3e6ea"></div>
<svg class="b" style="left:956.6px;top:581.8px;" width="6" height="16" viewBox="0 0 6 16" fill="none"><circle cx="3" cy="3.7" r="1.15" fill="#374151"/><circle cx="3" cy="8" r="1.15" fill="#374151"/><circle cx="3" cy="12.3" r="1.15" fill="#374151"/></svg>
<div class="b" style="left:979.0px;top:572.8px;width:640.0px;height:34.0px;border:1px solid #e1e4e8;border-radius:9px;background:#f9fafb"></div>
<svg class="b" style="left:993.5px;top:580.3px;" width="19" height="19" viewBox="0 0 19 19" fill="none"><g transform="scale(0.950)" stroke="#4b5563" stroke-width="1.58" stroke-linejoin="round" stroke-linecap="round"><path d="M6 2 H19"/><path d="M7 2 L5 9.5"/><path d="M10.3 2 V15.5 H19"/><rect x="12.8" y="5.8" width="5.8" height="6.8" rx="0.6"/><path d="M14.2 9.2 H17.2"/><path d="M10.3 9.5 H5 Q2.5 9.8 2 12.5 L1.5 14.8 H3.6"/><circle cx="5.6" cy="15.6" r="2.6"/><path d="M8.2 15.5 H10.3"/></g></svg>
<div class="t" style="left:1022.8px;top:582.6px;font-size:13.2px;font-weight:700;color:#4b5261;">6 Deliveries Scheduled</div>
<svg class="b" style="left:1171.8px;top:585.8px;" width="5" height="8.5" viewBox="0 0 5 8.5" fill="none"><path d="M1.15 1.15 L3.8500000000000005 4.25 L1.15 7.3500000000000005" stroke="#374151" stroke-width="1.7" stroke-linecap="round" stroke-linejoin="round"/></svg>
<div class="b" style="left:1208.0px;top:579.8px;width:1.0px;height:20.0px;background:#e3e6ea"></div>
<div class="t" style="left:1222.0px;top:582.5px;font-size:13.35px;font-weight:400;color:#71767f;">Sep 15 - Nov 26</div>
<div class="b" style="left:796.0px;top:633.6px;width:171.5px;height:34.0px;border:1.5px solid #4a86d4;border-left:3px solid #1f62bd;border-radius:9px;background:#f8fafd"></div>
<svg class="b" style="left:810.9px;top:641.1px;" width="19" height="19" viewBox="0 0 19 19" fill="none"><g transform="scale(0.950)" stroke="#1f5fb8" stroke-width="1.58" stroke-linejoin="round" stroke-linecap="round"><path d="M10 1.5 L18.5 6.5 L10 11.5 L1.5 6.5 Z"/><path d="M1.5 10.2 L10 15.2 L18.5 10.2"/><path d="M1.5 13.8 L10 18.8 L18.5 13.8"/></g></svg>
<div class="t" style="left:842.7px;top:643.5px;font-size:13.0px;font-weight:700;color:#1c5cb3;">Queued</div>
<svg class="b" style="left:904.2px;top:640.0px;" width="21.2" height="21.2" viewBox="0 0 21.2 21.2" fill="none"><circle cx="10.6" cy="10.6" r="10.6" fill="#1652a8"/><path d="M6.3999999999999995 10.799999999999999 L9.2 13.6 L14.8 7.6" stroke="#fff" stroke-width="2" stroke-linecap="round" stroke-linejoin="round"/></svg>
<div class="b" style="left:938.5px;top:640.6px;width:1.0px;height:20.0px;background:#e3e6ea"></div>
<svg class="b" style="left:950.4px;top:642.6px;" width="6" height="16" viewBox="0 0 6 16" fill="none"><circle cx="3" cy="3.7" r="1.15" fill="#374151"/><circle cx="3" cy="8" r="1.15" fill="#374151"/><circle cx="3" cy="12.3" r="1.15" fill="#374151"/></svg>
<div class="b" style="left:972.2px;top:633.6px;width:640.0px;height:34.0px;border:1.5px solid #4a86d4;border-left:3px solid #1f62bd;border-radius:9px;background:#f8fafd"></div>
<svg class="b" style="left:986.5px;top:641.1px;" width="19.5" height="19.5" viewBox="0 0 19.5 19.5" fill="none"><g transform="scale(0.975)" stroke="#1f74d6" stroke-width="1.74" stroke-linejoin="round" stroke-linecap="round"><path d="M3 10.5 V3.2 a0.8 0.8 0 0 1 0.8 -0.8 H5.6 a0.8 0.8 0 0 1 0.8 0.8 V10.5"/><path d="M2 10.5 H6.4 V13.8 H18.5 a0.8 0.8 0 0 1 0.8 0.8 V17.6 a0.8 0.8 0 0 1 -0.8 0.8 H2.8 a0.8 0.8 0 0 1 -0.8 -0.8 Z"/><circle cx="13.3" cy="8.0" r="3.0" stroke-width="1.4"/><circle cx="13.3" cy="8.0" r="0.8" stroke-width="1.2"/><path d="M16.26 9.22 L17.46 9.72 M14.52 10.96 L15.02 12.16 M12.08 10.96 L11.58 12.16 M10.34 9.22 L9.14 9.72 M10.34 6.78 L9.14 6.28 M12.08 5.04 L11.58 3.84 M14.52 5.04 L15.02 3.84 M16.26 6.78 L17.46 6.28" stroke-width="1.3"/><path d="M9 16.1 H10 M12 16.1 H13 M15 16.1 H16"/></g></svg>
<div class="t" style="left:1017.6px;top:643.6px;font-size:12.9px;font-weight:700;color:#1c5cb3;">Production</div>
<svg class="b" style="left:1099.6px;top:640.0px;" width="21.2" height="21.2" viewBox="0 0 21.2 21.2" fill="none"><circle cx="10.6" cy="10.6" r="10.6" fill="#1a72d8"/><path d="M6.3999999999999995 10.799999999999999 L9.2 13.6 L14.8 7.6" stroke="#fff" stroke-width="2" stroke-linecap="round" stroke-linejoin="round"/></svg>
<div class="b" style="left:1134.0px;top:640.6px;width:1.0px;height:20.0px;background:#e3e6ea"></div>
<svg class="b" style="left:1145.7px;top:642.6px;" width="6" height="16" viewBox="0 0 6 16" fill="none"><circle cx="3" cy="3.7" r="1.15" fill="#374151"/><circle cx="3" cy="8" r="1.15" fill="#374151"/><circle cx="3" cy="12.3" r="1.15" fill="#374151"/></svg>
<div class="b" style="left:796.0px;top:694.4px;width:171.5px;height:34.0px;border:1.5px solid #4a86d4;border-left:3px solid #1f62bd;border-radius:9px;background:#f8fafd"></div>
<svg class="b" style="left:810.9px;top:701.9px;" width="19" height="19" viewBox="0 0 19 19" fill="none"><g transform="scale(0.950)" stroke="#1f5fb8" stroke-width="1.58" stroke-linejoin="round" stroke-linecap="round"><path d="M10 1.5 L18.5 6.5 L10 11.5 L1.5 6.5 Z"/><path d="M1.5 10.2 L10 15.2 L18.5 10.2"/><path d="M1.5 13.8 L10 18.8 L18.5 13.8"/></g></svg>
<div class="t" style="left:842.7px;top:704.3px;font-size:13.0px;font-weight:700;color:#1c5cb3;">Queued</div>
<svg class="b" style="left:904.2px;top:700.8px;" width="21.2" height="21.2" viewBox="0 0 21.2 21.2" fill="none"><circle cx="10.6" cy="10.6" r="10.6" fill="#1652a8"/><path d="M6.3999999999999995 10.799999999999999 L9.2 13.6 L14.8 7.6" stroke="#fff" stroke-width="2" stroke-linecap="round" stroke-linejoin="round"/></svg>
<div class="b" style="left:938.5px;top:701.4px;width:1.0px;height:20.0px;background:#e3e6ea"></div>
<svg class="b" style="left:950.4px;top:703.4px;" width="6" height="16" viewBox="0 0 6 16" fill="none"><circle cx="3" cy="3.7" r="1.15" fill="#374151"/><circle cx="3" cy="8" r="1.15" fill="#374151"/><circle cx="3" cy="12.3" r="1.15" fill="#374151"/></svg>
<div class="b" style="left:972.2px;top:694.4px;width:640.0px;height:34.0px;border:1.5px solid #4a86d4;border-left:3px solid #1f62bd;border-radius:9px;background:#f8fafd"></div>
<svg class="b" style="left:986.5px;top:701.9px;" width="19.5" height="19.5" viewBox="0 0 19.5 19.5" fill="none"><g transform="scale(0.975)" stroke="#1f74d6" stroke-width="1.74" stroke-linejoin="round" stroke-linecap="round"><path d="M3 10.5 V3.2 a0.8 0.8 0 0 1 0.8 -0.8 H5.6 a0.8 0.8 0 0 1 0.8 0.8 V10.5"/><path d="M2 10.5 H6.4 V13.8 H18.5 a0.8 0.8 0 0 1 0.8 0.8 V17.6 a0.8 0.8 0 0 1 -0.8 0.8 H2.8 a0.8 0.8 0 0 1 -0.8 -0.8 Z"/><circle cx="13.3" cy="8.0" r="3.0" stroke-width="1.4"/><circle cx="13.3" cy="8.0" r="0.8" stroke-width="1.2"/><path d="M16.26 9.22 L17.46 9.72 M14.52 10.96 L15.02 12.16 M12.08 10.96 L11.58 12.16 M10.34 9.22 L9.14 9.72 M10.34 6.78 L9.14 6.28 M12.08 5.04 L11.58 3.84 M14.52 5.04 L15.02 3.84 M16.26 6.78 L17.46 6.28" stroke-width="1.3"/><path d="M9 16.1 H10 M12 16.1 H13 M15 16.1 H16"/></g></svg>
<div class="t" style="left:1017.6px;top:704.4px;font-size:12.9px;font-weight:700;color:#1c5cb3;">Production</div>
<svg class="b" style="left:1099.6px;top:700.8px;" width="21.2" height="21.2" viewBox="0 0 21.2 21.2" fill="none"><circle cx="10.6" cy="10.6" r="10.6" fill="#1a72d8"/><path d="M6.3999999999999995 10.799999999999999 L9.2 13.6 L14.8 7.6" stroke="#fff" stroke-width="2" stroke-linecap="round" stroke-linejoin="round"/></svg>
<div class="b" style="left:1134.0px;top:701.4px;width:1.0px;height:20.0px;background:#e3e6ea"></div>
<svg class="b" style="left:1145.7px;top:703.4px;" width="6" height="16" viewBox="0 0 6 16" fill="none"><circle cx="3" cy="3.7" r="1.15" fill="#374151"/><circle cx="3" cy="8" r="1.15" fill="#374151"/><circle cx="3" cy="12.3" r="1.15" fill="#374151"/></svg>
<div class="b" style="left:796.0px;top:756.0px;width:171.5px;height:34.0px;border:1.5px solid #4a86d4;border-left:3px solid #1f62bd;border-radius:9px;background:#f8fafd"></div>
<svg class="b" style="left:810.9px;top:763.5px;" width="19" height="19" viewBox="0 0 19 19" fill="none"><g transform="scale(0.950)" stroke="#1f5fb8" stroke-width="1.58" stroke-linejoin="round" stroke-linecap="round"><path d="M10 1.5 L18.5 6.5 L10 11.5 L1.5 6.5 Z"/><path d="M1.5 10.2 L10 15.2 L18.5 10.2"/><path d="M1.5 13.8 L10 18.8 L18.5 13.8"/></g></svg>
<div class="t" style="left:842.7px;top:765.9px;font-size:13.0px;font-weight:700;color:#1c5cb3;">Queued</div>
<svg class="b" style="left:904.2px;top:762.4px;" width="21.2" height="21.2" viewBox="0 0 21.2 21.2" fill="none"><circle cx="10.6" cy="10.6" r="10.6" fill="#1652a8"/><path d="M6.3999999999999995 10.799999999999999 L9.2 13.6 L14.8 7.6" stroke="#fff" stroke-width="2" stroke-linecap="round" stroke-linejoin="round"/></svg>
<div class="b" style="left:938.5px;top:763.0px;width:1.0px;height:20.0px;background:#e3e6ea"></div>
<svg class="b" style="left:950.4px;top:765.0px;" width="6" height="16" viewBox="0 0 6 16" fill="none"><circle cx="3" cy="3.7" r="1.15" fill="#374151"/><circle cx="3" cy="8" r="1.15" fill="#374151"/><circle cx="3" cy="12.3" r="1.15" fill="#374151"/></svg>
<div class="b" style="left:972.2px;top:756.0px;width:640.0px;height:34.0px;border:1.5px solid #4a86d4;border-left:3px solid #1f62bd;border-radius:9px;background:#f8fafd"></div>
<svg class="b" style="left:986.5px;top:763.5px;" width="19.5" height="19.5" viewBox="0 0 19.5 19.5" fill="none"><g transform="scale(0.975)" stroke="#1f74d6" stroke-width="1.74" stroke-linejoin="round" stroke-linecap="round"><path d="M3 10.5 V3.2 a0.8 0.8 0 0 1 0.8 -0.8 H5.6 a0.8 0.8 0 0 1 0.8 0.8 V10.5"/><path d="M2 10.5 H6.4 V13.8 H18.5 a0.8 0.8 0 0 1 0.8 0.8 V17.6 a0.8 0.8 0 0 1 -0.8 0.8 H2.8 a0.8 0.8 0 0 1 -0.8 -0.8 Z"/><circle cx="13.3" cy="8.0" r="3.0" stroke-width="1.4"/><circle cx="13.3" cy="8.0" r="0.8" stroke-width="1.2"/><path d="M16.26 9.22 L17.46 9.72 M14.52 10.96 L15.02 12.16 M12.08 10.96 L11.58 12.16 M10.34 9.22 L9.14 9.72 M10.34 6.78 L9.14 6.28 M12.08 5.04 L11.58 3.84 M14.52 5.04 L15.02 3.84 M16.26 6.78 L17.46 6.28" stroke-width="1.3"/><path d="M9 16.1 H10 M12 16.1 H13 M15 16.1 H16"/></g></svg>
<div class="t" style="left:1017.6px;top:766.0px;font-size:12.9px;font-weight:700;color:#1c5cb3;">Production</div>
<svg class="b" style="left:1099.6px;top:762.4px;" width="21.2" height="21.2" viewBox="0 0 21.2 21.2" fill="none"><circle cx="10.6" cy="10.6" r="10.6" fill="#1a72d8"/><path d="M6.3999999999999995 10.799999999999999 L9.2 13.6 L14.8 7.6" stroke="#fff" stroke-width="2" stroke-linecap="round" stroke-linejoin="round"/></svg>
<div class="b" style="left:1134.0px;top:763.0px;width:1.0px;height:20.0px;background:#e3e6ea"></div>
<svg class="b" style="left:1145.7px;top:765.0px;" width="6" height="16" viewBox="0 0 6 16" fill="none"><circle cx="3" cy="3.7" r="1.15" fill="#374151"/><circle cx="3" cy="8" r="1.15" fill="#374151"/><circle cx="3" cy="12.3" r="1.15" fill="#374151"/></svg>
<div class="b" style="left:796.2px;top:817.2px;width:177.5px;height:34.0px;border:1.5px solid #4a86d4;border-left:3px solid #1f62bd;border-radius:9px;background:#f8fafd"></div>
<svg class="b" style="left:810.0px;top:826.6px;" width="20.8" height="14.5" viewBox="0 0 20.8 14.5" fill="none"><g transform="scale(0.83)" stroke="#1f5fb8" stroke-width="2.05" stroke-linejoin="round" stroke-linecap="round"><path d="M1 7.6 L4 1 H21.6 L23.7 7.6 H15.3 L13.2 1"/><path d="M1 7.6 H5.4"/><path d="M5.4 2.4 V14.2 a1.8 1.8 0 0 0 1.8 1.8 H18.8 a1.8 1.8 0 0 0 1.8 -1.8 V7.6"/><path d="M13.2 8.8 V16"/></g></svg>
<div class="t" style="left:842.0px;top:826.9px;font-size:13.3px;font-weight:700;color:#1c5cb3;">Order Created</div>
<div class="b" style="left:945.0px;top:824.2px;width:1.0px;height:20.0px;background:#e3e6ea"></div>
<svg class="b" style="left:956.6px;top:826.2px;" width="6" height="16" viewBox="0 0 6 16" fill="none"><circle cx="3" cy="3.7" r="1.15" fill="#374151"/><circle cx="3" cy="8" r="1.15" fill="#374151"/><circle cx="3" cy="12.3" r="1.15" fill="#374151"/></svg>
<div class="b" style="left:979.0px;top:817.2px;width:640.0px;height:34.0px;border:1px solid #e1e4e8;border-radius:9px;background:#f9fafb"></div>
<svg class="b" style="left:993.5px;top:824.7px;" width="19" height="19" viewBox="0 0 19 19" fill="none"><g transform="scale(0.950)" stroke="#4b5563" stroke-width="1.58" stroke-linejoin="round" stroke-linecap="round"><path d="M6 2 H19"/><path d="M7 2 L5 9.5"/><path d="M10.3 2 V15.5 H19"/><rect x="12.8" y="5.8" width="5.8" height="6.8" rx="0.6"/><path d="M14.2 9.2 H17.2"/><path d="M10.3 9.5 H5 Q2.5 9.8 2 12.5 L1.5 14.8 H3.6"/><circle cx="5.6" cy="15.6" r="2.6"/><path d="M8.2 15.5 H10.3"/></g></svg>
<div class="t" style="left:1022.8px;top:827.0px;font-size:13.2px;font-weight:700;color:#4b5261;">3 Deliveries Scheduled</div>
<svg class="b" style="left:1171.8px;top:830.2px;" width="5" height="8.5" viewBox="0 0 5 8.5" fill="none"><path d="M1.15 1.15 L3.8500000000000005 4.25 L1.15 7.3500000000000005" stroke="#374151" stroke-width="1.7" stroke-linecap="round" stroke-linejoin="round"/></svg>
<div class="b" style="left:1208.0px;top:824.2px;width:1.0px;height:20.0px;background:#e3e6ea"></div>
<div class="t" style="left:1222.0px;top:826.9px;font-size:13.35px;font-weight:400;color:#71767f;">Sep 15 - Nov 26</div>
<div class="b" style="left:796.2px;top:878.3px;width:177.5px;height:34.0px;border:1.5px solid #4a86d4;border-left:3px solid #1f62bd;border-radius:9px;background:#f8fafd"></div>
<svg class="b" style="left:810.0px;top:887.7px;" width="20.8" height="14.5" viewBox="0 0 20.8 14.5" fill="none"><g transform="scale(0.83)" stroke="#1f5fb8" stroke-width="2.05" stroke-linejoin="round" stroke-linecap="round"><path d="M1 7.6 L4 1 H21.6 L23.7 7.6 H15.3 L13.2 1"/><path d="M1 7.6 H5.4"/><path d="M5.4 2.4 V14.2 a1.8 1.8 0 0 0 1.8 1.8 H18.8 a1.8 1.8 0 0 0 1.8 -1.8 V7.6"/><path d="M13.2 8.8 V16"/></g></svg>
<div class="t" style="left:842.0px;top:888.0px;font-size:13.3px;font-weight:700;color:#1c5cb3;">Order Created</div>
<div class="b" style="left:945.0px;top:885.3px;width:1.0px;height:20.0px;background:#e3e6ea"></div>
<svg class="b" style="left:956.6px;top:887.3px;" width="6" height="16" viewBox="0 0 6 16" fill="none"><circle cx="3" cy="3.7" r="1.15" fill="#374151"/><circle cx="3" cy="8" r="1.15" fill="#374151"/><circle cx="3" cy="12.3" r="1.15" fill="#374151"/></svg>
<div class="b" style="left:979.0px;top:878.3px;width:640.0px;height:34.0px;border:1px solid #e1e4e8;border-radius:9px;background:#f9fafb"></div>
<svg class="b" style="left:993.5px;top:885.8px;" width="19" height="19" viewBox="0 0 19 19" fill="none"><g transform="scale(0.950)" stroke="#4b5563" stroke-width="1.58" stroke-linejoin="round" stroke-linecap="round"><path d="M6 2 H19"/><path d="M7 2 L5 9.5"/><path d="M10.3 2 V15.5 H19"/><rect x="12.8" y="5.8" width="5.8" height="6.8" rx="0.6"/><path d="M14.2 9.2 H17.2"/><path d="M10.3 9.5 H5 Q2.5 9.8 2 12.5 L1.5 14.8 H3.6"/><circle cx="5.6" cy="15.6" r="2.6"/><path d="M8.2 15.5 H10.3"/></g></svg>
<div class="t" style="left:1022.8px;top:888.1px;font-size:13.2px;font-weight:700;color:#4b5261;">2 Deliveries Scheduled</div>
<svg class="b" style="left:1171.8px;top:891.3px;" width="5" height="8.5" viewBox="0 0 5 8.5" fill="none"><path d="M1.15 1.15 L3.8500000000000005 4.25 L1.15 7.3500000000000005" stroke="#374151" stroke-width="1.7" stroke-linecap="round" stroke-linejoin="round"/></svg>
<div class="b" style="left:1208.0px;top:885.3px;width:1.0px;height:20.0px;background:#e3e6ea"></div>
<div class="t" style="left:1222.0px;top:888.0px;font-size:13.35px;font-weight:400;color:#71767f;">Sep 15 - Nov 26</div>
<div class="b" style="left:796.2px;top:939.7px;width:177.5px;height:34.0px;border:1.5px solid #4a86d4;border-left:3px solid #1f62bd;border-radius:9px;background:#f8fafd"></div>
<svg class="b" style="left:810.0px;top:949.1px;" width="20.8" height="14.5" viewBox="0 0 20.8 14.5" fill="none"><g transform="scale(0.83)" stroke="#1f5fb8" stroke-width="2.05" stroke-linejoin="round" stroke-linecap="round"><path d="M1 7.6 L4 1 H21.6 L23.7 7.6 H15.3 L13.2 1"/><path d="M1 7.6 H5.4"/><path d="M5.4 2.4 V14.2 a1.8 1.8 0 0 0 1.8 1.8 H18.8 a1.8 1.8 0 0 0 1.8 -1.8 V7.6"/><path d="M13.2 8.8 V16"/></g></svg>
<div class="t" style="left:842.0px;top:949.4px;font-size:13.3px;font-weight:700;color:#1c5cb3;">Order Created</div>
<div class="b" style="left:945.0px;top:946.7px;width:1.0px;height:20.0px;background:#e3e6ea"></div>
<svg class="b" style="left:956.6px;top:948.7px;" width="6" height="16" viewBox="0 0 6 16" fill="none"><circle cx="3" cy="3.7" r="1.15" fill="#374151"/><circle cx="3" cy="8" r="1.15" fill="#374151"/><circle cx="3" cy="12.3" r="1.15" fill="#374151"/></svg>
<div class="b" style="left:979.0px;top:939.7px;width:640.0px;height:34.0px;border:1px solid #e1e4e8;border-radius:9px;background:#f9fafb"></div>
<svg class="b" style="left:993.5px;top:947.2px;" width="19" height="19" viewBox="0 0 19 19" fill="none"><g transform="scale(0.950)" stroke="#4b5563" stroke-width="1.58" stroke-linejoin="round" stroke-linecap="round"><path d="M6 2 H19"/><path d="M7 2 L5 9.5"/><path d="M10.3 2 V15.5 H19"/><rect x="12.8" y="5.8" width="5.8" height="6.8" rx="0.6"/><path d="M14.2 9.2 H17.2"/><path d="M10.3 9.5 H5 Q2.5 9.8 2 12.5 L1.5 14.8 H3.6"/><circle cx="5.6" cy="15.6" r="2.6"/><path d="M8.2 15.5 H10.3"/></g></svg>
<div class="t" style="left:1022.8px;top:949.5px;font-size:13.2px;font-weight:700;color:#4b5261;">3 Deliveries Scheduled</div>
<svg class="b" style="left:1171.8px;top:952.7px;" width="5" height="8.5" viewBox="0 0 5 8.5" fill="none"><path d="M1.15 1.15 L3.8500000000000005 4.25 L1.15 7.3500000000000005" stroke="#374151" stroke-width="1.7" stroke-linecap="round" stroke-linejoin="round"/></svg>
<div class="b" style="left:1208.0px;top:946.7px;width:1.0px;height:20.0px;background:#e3e6ea"></div>
<div class="t" style="left:1222.0px;top:949.4px;font-size:13.35px;font-weight:400;color:#71767f;">Sep 15 - Nov 26</div>
<div class="b" style="left:796.2px;top:1000.7px;width:177.5px;height:34.0px;border:1.5px solid #4a86d4;border-left:3px solid #1f62bd;border-radius:9px;background:#f8fafd"></div>
<svg class="b" style="left:810.0px;top:1010.1px;" width="20.8" height="14.5" viewBox="0 0 20.8 14.5" fill="none"><g transform="scale(0.83)" stroke="#1f5fb8" stroke-width="2.05" stroke-linejoin="round" stroke-linecap="round"><path d="M1 7.6 L4 1 H21.6 L23.7 7.6 H15.3 L13.2 1"/><path d="M1 7.6 H5.4"/><path d="M5.4 2.4 V14.2 a1.8 1.8 0 0 0 1.8 1.8 H18.8 a1.8 1.8 0 0 0 1.8 -1.8 V7.6"/><path d="M13.2 8.8 V16"/></g></svg>
<div class="t" style="left:842.0px;top:1010.4px;font-size:13.3px;font-weight:700;color:#1c5cb3;">Order Created</div>
<div class="b" style="left:945.0px;top:1007.7px;width:1.0px;height:20.0px;background:#e3e6ea"></div>
<svg class="b" style="left:956.6px;top:1009.7px;" width="6" height="16" viewBox="0 0 6 16" fill="none"><circle cx="3" cy="3.7" r="1.15" fill="#374151"/><circle cx="3" cy="8" r="1.15" fill="#374151"/><circle cx="3" cy="12.3" r="1.15" fill="#374151"/></svg>
<div class="b" style="left:979.0px;top:1000.7px;width:640.0px;height:34.0px;border:1px solid #e1e4e8;border-radius:9px;background:#f9fafb"></div>
<svg class="b" style="left:993.5px;top:1008.2px;" width="19" height="19" viewBox="0 0 19 19" fill="none"><g transform="scale(0.950)" stroke="#4b5563" stroke-width="1.58" stroke-linejoin="round" stroke-linecap="round"><path d="M6 2 H19"/><path d="M7 2 L5 9.5"/><path d="M10.3 2 V15.5 H19"/><rect x="12.8" y="5.8" width="5.8" height="6.8" rx="0.6"/><path d="M14.2 9.2 H17.2"/><path d="M10.3 9.5 H5 Q2.5 9.8 2 12.5 L1.5 14.8 H3.6"/><circle cx="5.6" cy="15.6" r="2.6"/><path d="M8.2 15.5 H10.3"/></g></svg>
<div class="t" style="left:1022.8px;top:1010.5px;font-size:13.2px;font-weight:700;color:#4b5261;">5 Deliveries Scheduled</div>
<svg class="b" style="left:1171.8px;top:1013.7px;" width="5" height="8.5" viewBox="0 0 5 8.5" fill="none"><path d="M1.15 1.15 L3.8500000000000005 4.25 L1.15 7.3500000000000005" stroke="#374151" stroke-width="1.7" stroke-linecap="round" stroke-linejoin="round"/></svg>
<div class="b" style="left:1208.0px;top:1007.7px;width:1.0px;height:20.0px;background:#e3e6ea"></div>
<div class="t" style="left:1222.0px;top:1010.4px;font-size:13.35px;font-weight:400;color:#71767f;">Sep 15 - Nov 26</div>
<div class="b" style="left:1350.3px;top:446.0px;width:1.4px;height:640.0px;background:#3a80d8"></div>
<div class="b" style="left:1569.0px;top:233.0px;width:368.0px;height:831.0px;background:#fff;border-left:1px solid #e6e8ec;box-shadow:-3px 0 10px rgba(30,40,60,0.06)"></div>
<div class="b" style="left:1595.4px;top:249.5px;width:38.0px;height:38.0px;border:1px solid #e3e6ea;border-radius:50%;background:#fff"></div>
<svg class="b" style="left:1605.5px;top:259.6px;" width="18" height="18" viewBox="0 0 18 18" fill="none"><path d="M9.0 1.2 L16.8 9.0 L9.0 16.8 L1.2 9.0 Z" stroke="#e4602f" stroke-width="1.8" stroke-linejoin="round"/><path d="M9.0 5.0 V10.0" stroke="#e4602f" stroke-width="1.8" stroke-linecap="round"/><circle cx="9.0" cy="12.6" r="1.05" fill="#e4602f"/></svg>
<div class="t" style="left:1646.8px;top:261.5px;font-size:15.3px;font-weight:700;color:#1f2937;">Flag Orders <span style="font-weight:400">(3)</span></div>
<svg class="b" style="left:1899.5px;top:260.5px;" width="16" height="16" viewBox="0 0 16 16" fill="none"><path d="M1.2 1.2 L14.8 14.8 M14.8 1.2 L1.2 14.8" stroke="#1f2937" stroke-width="2" stroke-linecap="round"/></svg>
<div class="b" style="left:1569.0px;top:302.5px;width:368.0px;height:1.2px;background:#e8eaee"></div>
<div class="t" style="left:1595.4px;top:315.1px;font-size:12.45px;font-weight:400;color:#70757e;">HOO KOO E KOO</div>
<svg class="b" style="left:1708.0px;top:316.5px;" width="4.8" height="8.6" viewBox="0 0 4.8 8.6" fill="none"><path d="M1.05 1.05 L3.75 4.3 L1.05 7.55" stroke="#8d929b" stroke-width="1.5" stroke-linecap="round" stroke-linejoin="round"/></svg>
<div class="t" style="left:1722.0px;top:315.1px;font-size:12.5px;font-weight:400;color:#70757e;">...</div>
<svg class="b" style="left:1742.0px;top:316.5px;" width="4.8" height="8.6" viewBox="0 0 4.8 8.6" fill="none"><path d="M1.05 1.05 L3.75 4.3 L1.05 7.55" stroke="#8d929b" stroke-width="1.5" stroke-linecap="round" stroke-linejoin="round"/></svg>
<div class="t" style="left:1756.6px;top:314.1px;font-size:13.6px;font-weight:700;color:#1f2937;">Order 123456-091321</div>
<div class="b" style="left:1569.0px;top:338.0px;width:368.0px;height:1.2px;background:#e8eaee"></div>
<div class="t" style="left:1595.4px;top:358.6px;font-size:13.4px;font-weight:400;color:#1f2937;">Sep 15 - Nov 26</div>
<div class="t" style="left:1595.4px;top:373.9px;font-size:14.0px;font-weight:400;color:#71767f;">30 - 63 days</div>
<div class="t" style="left:1763.4px;top:358.9px;font-size:13.1px;font-weight:400;color:#1f2937;">$3,000,112.50</div>
<div class="t" style="left:1763.4px;top:374.2px;font-size:13.6px;font-weight:400;color:#71767f;">Order Value</div>
<div class="b" style="left:1569.0px;top:408.0px;width:368.0px;height:1.2px;background:#e8eaee"></div>
<div class="b" style="left:1596.0px;top:426.7px;width:50.0px;height:50.3px;border:1px solid #e3e6ea;border-radius:7px;background:#fff"></div>
<svg class="b" style="left:1596.0px;top:426.7px;" width="50" height="50" viewBox="0 0 50 50" fill="none"><path d="M11 17 L33 30" stroke="#6b7079" stroke-width="1.6" stroke-linecap="round"/><circle cx="34" cy="30.5" r="2" fill="#8d929b"/></svg>
<div class="t" style="left:1664.5px;top:430.3px;font-size:15.3px;font-weight:700;color:#1f2937;">Component Name</div>
<div class="t" style="left:1664.5px;top:452.0px;font-size:15.5px;font-weight:400;color:#30343b;">Delivery 1/6</div>
<div class="b" style="left:1888.4px;top:426.7px;width:25.0px;height:25.0px;border:1px solid #e3e6ea;border-radius:50%;background:#fff"></div>
<svg class="b" style="left:1897.9px;top:431.2px;" width="6" height="16" viewBox="0 0 6 16" fill="none"><circle cx="3" cy="4.0" r="1.1" fill="#374151"/><circle cx="3" cy="8" r="1.1" fill="#374151"/><circle cx="3" cy="12.0" r="1.1" fill="#374151"/></svg>
<div class="b" style="left:1596.0px;top:495.9px;width:317.0px;height:41.3px;border:1px solid #e3e6ea;border-radius:9px;background:#fff"></div>
<div class="t" style="left:1612.8px;top:509.2px;font-size:15.2px;font-weight:400;color:#6b7280;">Reason</div>
<svg class="b" style="left:1887.6px;top:513.2px;" width="10.4" height="6.4" viewBox="0 0 10.4 6.4" fill="none"><path d="M1.2 1.2 L5.2 5.2 L9.2 1.2" stroke="#1f2937" stroke-width="1.8" stroke-linecap="round" stroke-linejoin="round"/></svg>
<div class="b" style="left:1596.0px;top:547.0px;width:317.0px;height:43.0px;border:1px solid #e3e6ea;border-radius:9px;background:#fff"></div>
<svg class="b" style="left:1725.0px;top:559.0px;" width="17" height="17" viewBox="0 0 17 17" fill="none"><path d="M8.5 1.2 L15.8 8.5 L8.5 15.8 L1.2 8.5 Z" stroke="#4b5563" stroke-width="1.6" stroke-linejoin="round"/><path d="M8.5 5 V9" stroke="#4b5563" stroke-width="1.6"/></svg>
<div class="t" style="left:1752.0px;top:562.8px;font-size:15.5px;font-weight:700;color:#4b5563;">Flag</div>
</div>
<div class="b" style="left:1284.0px;top:567.0px;width:736.0px;height:446.0px;background:#f2f3f5;border-radius:12px;box-shadow:0 10px 36px rgba(20,30,60,0.15),0 2px 6px rgba(20,30,60,0.06)"></div>
<div class="b" style="left:1317.5px;top:600.0px;width:321.0px;height:378.0px;background:#fff;border-radius:10px"></div>
<div class="b" style="left:1655.0px;top:645.5px;width:17.0px;height:17.0px;background:#fff;transform:rotate(45deg);border-radius:2px"></div>
<div class="b" style="left:1655.0px;top:776.5px;width:17.0px;height:17.0px;background:#fff;transform:rotate(45deg);border-radius:2px"></div>
<div class="b" style="left:1655.0px;top:908.0px;width:17.0px;height:17.0px;background:#fff;transform:rotate(45deg);border-radius:2px"></div>
<div class="b" style="left:1667.9px;top:602.4px;width:320.6px;height:377.9px;background:#fff;border-radius:10px"></div>
<div class="t" style="left:1344.0px;top:623.3px;font-size:15.3px;font-weight:700;color:#1f2937;">Org. Intelligence</div>
<svg class="b" style="left:1300.0px;top:640.0px;" width="360" height="170" viewBox="0 0 360 170" fill="none"><path d="M303.06 114.36 A131.5 131.5 0 0 1 309.50 155.00" stroke="#eef0f3" stroke-width="6"/><path d="M46.50 155.00 A131.5 131.5 0 0 1 303.06 114.36" stroke="#1a73d4" stroke-width="6.2"/><path d="M52.80 155.00 A125.2 125.2 0 0 1 251.59 53.71" stroke="#7eaee6" stroke-width="6.6"/></svg>
<div class="b" style="left:1449.3px;top:712.6px;width:57.0px;height:57.0px;background:#eef0f3;border-radius:50%"></div>
<svg class="b" style="left:1460.0px;top:723.5px;" width="35" height="35" viewBox="0 0 35 35" fill="none"><g stroke="#1f74d6" stroke-width="1.1" fill="none"><circle cx="23.80" cy="17.50" r="10.30"/><circle cx="20.65" cy="22.96" r="10.30"/><circle cx="14.35" cy="22.96" r="10.30"/><circle cx="11.20" cy="17.50" r="10.30"/><circle cx="14.35" cy="12.04" r="10.30"/><circle cx="20.65" cy="12.04" r="10.30"/></g></svg>
<div class="t" style="left:1454.2px;top:780.2px;font-size:42px;font-weight:700;color:#111827;">98</div>
<div class="t" style="left:1343.4px;top:802.8px;font-size:12.5px;font-weight:700;color:#2f66b8;">0</div>
<div class="t" style="left:1363.0px;top:802.8px;font-size:12.5px;font-weight:400;color:#8fb0dd;">97</div>
<div class="t" style="left:1565.6px;top:802.8px;font-size:12.5px;font-weight:400;color:#8fb0dd;">99</div>
<div class="t" style="left:1591.4px;top:802.8px;font-size:12.5px;font-weight:700;color:#2f66b8;">100</div>
<div class="b" style="left:1343.4px;top:836.5px;width:269.2px;height:2.0px;background:#eef0f3"></div>
<div class="t" style="left:1343.8px;top:861.8px;font-size:15.5px;font-weight:700;color:#1f2937;">Transactions</div>
<div class="t" style="left:1481.0px;top:862.0px;font-size:15.2px;font-weight:700;color:#1f2937;">Reputation Score</div>
<div class="t" style="left:1343.8px;top:893.4px;font-size:27.2px;font-weight:400;color:#111827;transform:scaleX(0.925);transform-origin:0 0">1.2M</div>
<div class="t" style="left:1482.0px;top:893.4px;font-size:27.2px;font-weight:700;color:#111827;transform:scaleX(0.95);transform-origin:0 0">813</div>
<svg class="b" style="left:1532.0px;top:894.0px;" width="23" height="23" viewBox="0 0 23 23" fill="none"><path d="M21.31 13.45 L18.32 16.06 L17.06 19.81 L13.10 19.54 L9.55 21.31 L6.94 18.32 L3.19 17.06 L3.46 13.10 L1.69 9.55 L4.68 6.94 L5.94 3.19 L9.90 3.46 L13.45 1.69 L16.06 4.68 L19.81 5.94 L19.54 9.90 Z" stroke="#eba36c" stroke-width="1.6" stroke-linejoin="round"/><circle cx="11.5" cy="10" r="2.5" stroke="#eba36c" stroke-width="1.5"/><path d="M7.6 15.8 Q11.5 11.8 15.4 15.8" stroke="#eba36c" stroke-width="1.5" stroke-linecap="round"/></svg>
<svg class="b" style="left:1343.4px;top:925.0px;" width="17.2" height="17.2" viewBox="0 0 17.2 17.2" fill="none"><circle cx="8.6" cy="8.6" r="8.6" fill="#d4f4d9"/><path d="M8.6 4.6 L12.6 11.6 H4.6 Z" fill="#33a64a"/></svg>
<div class="t" style="left:1368.0px;top:926.9px;font-size:15.8px;font-weight:700;color:#35a847;transform:scaleX(0.86);transform-origin:0 0">3.1%</div>
<svg class="b" style="left:1481.0px;top:925.0px;" width="17.2" height="17.2" viewBox="0 0 17.2 17.2" fill="none"><circle cx="8.6" cy="8.6" r="8.6" fill="#d4f4d9"/><path d="M8.6 4.6 L12.6 11.6 H4.6 Z" fill="#33a64a"/></svg>
<div class="t" style="left:1505.6px;top:926.9px;font-size:15.8px;font-weight:700;color:#35a847;transform:scaleX(0.86);transform-origin:0 0">5%</div>
<div class="t" style="left:1694.0px;top:624.6px;font-size:15.4px;font-weight:700;color:#1f2937;">Customer Engagement</div>
<div class="t" style="left:1694.0px;top:644.4px;font-size:15.6px;font-weight:400;color:#7b818b;">3 Month Trend</div>
<div class="t" style="left:1693.5px;top:678.3px;font-size:42px;font-weight:700;color:#111827;transform:scaleX(0.925);transform-origin:0 0">72.7%</div>
<svg class="b" style="left:1902.2px;top:698.0px;" width="17.2" height="17.2" viewBox="0 0 17.2 17.2" fill="none"><circle cx="8.6" cy="8.6" r="8.6" fill="#d4f4d9"/><path d="M8.6 4.6 L12.6 11.6 H4.6 Z" fill="#33a64a"/></svg>
<div class="t" style="left:1925.5px;top:699.8px;font-size:16px;font-weight:700;color:#35a847;transform:scaleX(0.95);transform-origin:0 0">2.3%</div>
<div class="b" style="left:1726.0px;top:723.0px;width:48.2px;height:24.5px;background:#8eb6ec;border-radius:7px"></div>
<div class="t" style="left:1731.2px;top:730.2px;font-size:12.2px;font-weight:700;color:#1b4f9e;">69.3%</div>
<div class="b" style="left:1694.0px;top:754.0px;width:268.2px;height:169.5px;border:1px solid #e6e8ec;border-radius:8px;background:#fff"></div>
<div class="b" style="left:1695.0px;top:794.5px;width:266.0px;height:1.2px;background:#e9ebee"></div>
<div class="b" style="left:1695.0px;top:837.5px;width:266.0px;height:1.2px;background:#e9ebee"></div>
<div class="b" style="left:1695.0px;top:880.5px;width:266.0px;height:1.2px;background:#e9ebee"></div>
<div class="b" style="left:1781.9px;top:755.0px;width:1.2px;height:167.0px;background:repeating-linear-gradient(180deg,#d3d7dc 0 2px,transparent 2px 5px)"></div>
<div class="b" style="left:1871.5px;top:755.0px;width:1.2px;height:167.0px;background:repeating-linear-gradient(180deg,#d3d7dc 0 2px,transparent 2px 5px)"></div>
<div class="b" style="left:1750.2px;top:754.0px;width:1.7px;height:169.5px;background:#4a88d8"></div>
<svg class="b" style="left:1694.0px;top:800.0px;" width="270" height="40" viewBox="0 0 270 40" fill="none"><path d="M0.0 29.5 C4.2 27.8 16.2 19.5 25.3 19.0 C34.3 18.5 46.9 25.2 54.3 26.4 C61.7 27.6 58.5 28.5 69.8 26.0 C81.1 23.5 109.4 13.3 122.0 11.2 C134.6 9.1 137.3 11.2 145.2 13.3 C153.1 15.4 161.7 23.0 169.6 23.7 C177.5 24.4 184.6 17.3 192.8 17.5 C201.0 17.7 210.2 25.3 218.7 24.9 C227.2 24.5 235.7 17.5 243.9 15.2 C252.2 12.9 264.2 11.7 268.2 11.0" stroke="#3a7fd5" stroke-width="1.9" stroke-linecap="round"/></svg>
<svg class="b" style="left:1746.0px;top:820.0px;" width="20" height="24" viewBox="0 0 20 24" fill="none"><path d="M5.5 2.2 a1.6 1.6 0 0 1 3.2 0 V9 l0.4 -1.4 a1.5 1.5 0 0 1 2.9 0.6 l0.3 -0.8 a1.5 1.5 0 0 1 2.8 0.8 l0.3 -0.5 a1.4 1.4 0 0 1 2.6 0.9 V15 c0 3.2 -2.2 6.5 -5.8 6.5 H9.5 C7.2 21.5 6 20 4.6 18 L1.8 13.6 a1.5 1.5 0 0 1 2.3 -1.9 L5.5 13.2 Z" fill="#fff" stroke="#1f2937" stroke-width="1.1" stroke-linejoin="round"/><path d="M9 16 v3 M11.5 16 v3 M14 16 v3" stroke="#1f2937" stroke-width="0.9"/></svg>
<div class="t" style="left:1694.0px;top:935.8px;font-size:13.6px;font-weight:400;color:#6b7280;">Jul</div>
<div class="b" style="left:1722.0px;top:931.3px;width:53.4px;height:23.9px;background:#e6e8eb;border-radius:10px"></div>
<div class="t" style="left:1729.2px;top:937.0px;font-size:12.5px;font-weight:700;color:#5b616b;">JUL 18</div>
<div class="t" style="left:1783.0px;top:935.8px;font-size:13.6px;font-weight:400;color:#6b7280;">Aug</div>
<div class="t" style="left:1873.0px;top:935.8px;font-size:13.6px;font-weight:400;color:#6b7280;">Sep</div>
</body></html>
